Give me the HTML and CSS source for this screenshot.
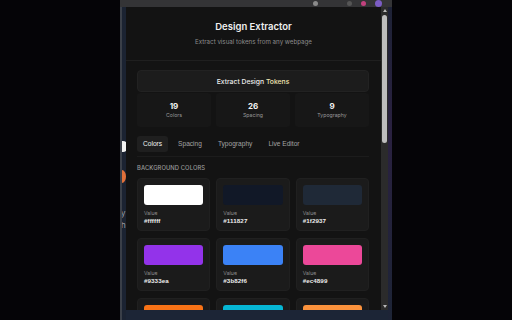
FILE: index.html
```html
<!DOCTYPE html>
<html>
<head>
<meta charset="utf-8">
<link rel="stylesheet" href="styles.css">
</head>
<body>
<div class="void-left"></div>
<div class="browser">
  <div class="toolbar">
    <span class="tb-icon tb-a"></span>
    <span class="tb-icon tb-b"></span>
    <span class="tb-icon tb-c"></span>
    <span class="tb-icon tb-d"></span>
  </div>
  <div class="browser-body">
    <div class="edge-left">
      <span class="blob blob-white"></span>
      <span class="blob blob-orange"></span>
      <span class="edge-text">y<br>h</span>
    </div>
    <div class="center">
      <div class="popup">
        <div class="content">
          <header class="header">
            <h1 class="title">Design Extractor</h1>
            <p class="subtitle">Extract visual tokens from any webpage</p>
          </header>
          <main class="main">
            <button class="extract-btn">Extract Design <span class="hl">Tokens</span></button>
            <div class="stats">
              <div class="stat"><div class="stat-num">19</div><div class="stat-label">Colors</div></div>
              <div class="stat"><div class="stat-num">26</div><div class="stat-label">Spacing</div></div>
              <div class="stat"><div class="stat-num">9</div><div class="stat-label">Typography</div></div>
            </div>
            <nav class="tabs">
              <span class="tab active">Colors</span>
              <span class="tab">Spacing</span>
              <span class="tab">Typography</span>
              <span class="tab">Live Editor</span>
            </nav>
            <h2 class="section-title">BACKGROUND COLORS</h2>
            <div class="grid">
              <div class="card"><div class="swatch" style="background:#ffffff"></div><div class="val-label">Value</div><div class="val">#ffffff</div></div>
              <div class="card"><div class="swatch" style="background:#111827"></div><div class="val-label">Value</div><div class="val">#111827</div></div>
              <div class="card"><div class="swatch" style="background:#1f2937"></div><div class="val-label">Value</div><div class="val">#1f2937</div></div>
              <div class="card"><div class="swatch" style="background:#9333ea"></div><div class="val-label">Value</div><div class="val">#9333ea</div></div>
              <div class="card"><div class="swatch" style="background:#3b82f6"></div><div class="val-label">Value</div><div class="val">#3b82f6</div></div>
              <div class="card"><div class="swatch" style="background:#ec4899"></div><div class="val-label">Value</div><div class="val">#ec4899</div></div>
              <div class="card"><div class="swatch" style="background:#f97316"></div></div>
              <div class="card"><div class="swatch" style="background:#06b6d4"></div></div>
              <div class="card"><div class="swatch" style="background:#fb923c"></div></div>
            </div>
          </main>
        </div>
        <div class="scrollbar">
          <span class="sb-arrow sb-up"></span>
          <div class="sb-track"><div class="sb-thumb"></div></div>
          <span class="sb-arrow sb-down"></span>
        </div>
      </div>
      <div class="page-bottom"></div>
    </div>
    <div class="edge-right"></div>
  </div>
</div>
<div class="void-right"></div>
</body>
</html>
```
FILE: styles.css
```css
* { box-sizing: border-box; margin: 0; padding: 0; }
html, body { width: 512px; height: 320px; overflow: hidden; }
body {
  background: #050407;
  display: flex;
  font-family: Inter, "Liberation Sans", sans-serif;
  color: #e8e8e8;
}
.void-left { width: 120px; flex: none; }
.void-right { flex: 1; }
.browser { width: 272px; flex: none; display: flex; flex-direction: column; }
.toolbar {
  height: 7px; background: #343436; display: flex; align-items: center;
  justify-content: flex-end; gap: 9px; padding-right: 10px;
}
.tb-icon { width: 5px; height: 5px; border-radius: 50%; background: #666; }
.tb-a { background: #8a8a8a; margin-right: 20px; }
.tb-b { background: #555; }
.tb-c { background: #c2417e; }
.tb-d { background: #7b5cc4; width: 7px; height: 7px; }
.browser-body { flex: 1; display: flex; }
.edge-left {
  width: 6px; background: #1b2332; position: relative; overflow: hidden;
  border-left: 2px solid #3a3f48;
}
.blob { position: absolute; left: -4px; border-radius: 50%; }
.blob-white { top: 134px; width: 10px; height: 11px; background: #f2f2f2; }
.blob-orange { top: 163px; width: 8px; height: 13px; background: #e0703a; }
.edge-text { position: absolute; top: 200px; left: -1px; font-size: 8px; line-height: 12px; color: #9aa0aa; }
.edge-right { width: 4px; background: linear-gradient(#1e2236, #2a2140 40%, #1d2436); }
.center { width: 262px; display: flex; flex-direction: column; }
.popup { height: 303px; display: flex; background: #131313; }
.page-bottom { flex: 1; background: #1c2536; }
.content { width: 255px; overflow: hidden; }
.scrollbar {
  width: 7px; background: #2b2b2b; display: flex; flex-direction: column;
  align-items: center; padding: 2px 0;
}
.sb-arrow { width: 0; height: 0; border-left: 2.5px solid transparent; border-right: 2.5px solid transparent; }
.sb-up { border-bottom: 3px solid #b8b8b8; }
.sb-down { border-top: 3px solid #b8b8b8; }
.sb-track { flex: 1; width: 100%; padding: 3px 1px; }
.sb-thumb { height: 128px; background: #bdbdbd; border-radius: 3px; }

.header {
  height: 54px; border-bottom: 1px solid #1f1f1f; text-align: center; padding-top: 13px;
}
.title { font-size: 9.5px; font-weight: 600; line-height: 14px; color: #f0f0f0; }
.subtitle { font-size: 6.2px; line-height: 9px; color: #8c8c8c; margin-top: 3px; }

.main { padding: 9px 12px 0 11px; }
.extract-btn {
  width: 100%; height: 22px; border: 1px solid #222; border-radius: 4px;
  background: #1c1c1c; color: #ececec; font-family: inherit; font-size: 6.8px; font-weight: 500;
  display: block;
}
.hl { color: #efe3b0; }
.stats { display: grid; grid-template-columns: repeat(3, 1fr); gap: 5px; margin-top: 1px; }
.stat {
  height: 34px; background: #171717; border-radius: 3px; text-align: center;
  display: flex; flex-direction: column; justify-content: center;
}
.stat-num { font-size: 8px; font-weight: 700; line-height: 10px; color: #f2f2f2; }
.stat-label { font-size: 5.2px; line-height: 7px; color: #9a9a9a; margin-top: 1px; }

.tabs {
  display: flex; gap: 4px; margin-top: 9px; padding-bottom: 4px;
  border-bottom: 1px solid #1c1c1c;
  font-family: "Liberation Sans", Arial, sans-serif;
}
.tab { font-size: 6.6px; color: #a3a3a3; padding: 0 6px; line-height: 16px; border-radius: 3px; }
.tab.active { background: #1f1f1f; color: #f2f2f2; }

.section-title { font-size: 5.8px; font-weight: 500; color: #9a9a9a; letter-spacing: 0.1px; margin-top: 7px; line-height: 8px; }
.grid { display: grid; grid-template-columns: repeat(3, 1fr); gap: 7px 6px; margin-top: 6px; }
.card { background: #1b1b1b; border: 1px solid #202020; border-radius: 4px; padding: 6px 6px 6px; min-height: 53px; }
.swatch { height: 20px; border-radius: 3px; }
.val-label { font-size: 5.2px; line-height: 6px; color: #8e8e8e; margin-top: 5px; }
.val { font-family: "Liberation Sans", Arial, sans-serif; font-size: 6.2px; font-weight: 700; line-height: 7px; color: #ececec; margin-top: 1px; letter-spacing: 0.1px; }
```
